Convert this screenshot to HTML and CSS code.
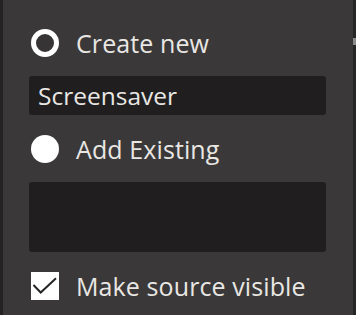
FILE: index.html
```html
<!DOCTYPE html>
<html>
<head>
<meta charset="utf-8">
<link rel="stylesheet" href="styles.css">
</head>
<body>
<div class="frame">
  <div class="edge-left"></div>
  <div class="panel">
    <div class="row row-first">
      <span class="radio radio-ring"></span>
      <span class="label">Create new</span>
    </div>
    <div class="field field-text">Screensaver</div>
    <div class="row">
      <span class="radio radio-filled"></span>
      <span class="label">Add Existing</span>
    </div>
    <div class="field field-list"></div>
    <div class="row">
      <span class="check">
        <svg width="28" height="28" viewBox="0 0 28 28"><path d="M2.5 13 L9.7 20.5 L25 6.3" fill="none" stroke="#262425" stroke-width="2"/></svg>
      </span>
      <span class="label">Make source visible</span>
    </div>
  </div>
  <div class="edge-right"><span class="thumb"></span></div>
</div>
</body>
</html>
```
FILE: styles.css
```css
html, body {
  margin: 0;
  padding: 0;
  background: #3a3838;
}
.frame {
  width: 356px;
  height: 315px;
  display: flex;
  overflow: hidden;
  font-family: "Open Sans", "Noto Sans", sans-serif;
  color: #e9e7e4;
}
.edge-left {
  width: 3px;
  background: #242223;
  flex: none;
}
.panel {
  flex: 1;
  padding-left: 26px;
  padding-right: 27px;
  display: flex;
  flex-direction: column;
}
.edge-right {
  width: 3px;
  background: #272627;
  flex: none;
  position: relative;
}
.thumb {
  position: absolute;
  left: 0;
  top: 38px;
  width: 3px;
  height: 7px;
  background: #8a8a8a;
}
.row {
  display: flex;
  align-items: center;
  height: 28px;
  margin-top: 20px;
  padding-left: 2px;
}
.row-first {
  margin-top: 29px;
}
.radio {
  width: 28px;
  height: 28px;
  box-sizing: border-box;
  border-radius: 50%;
  flex: none;
}
.radio-ring {
  border: 5px solid #ffffff;
  background: #363434;
}
.radio-filled {
  background: #ffffff;
}
.check {
  width: 28px;
  height: 28px;
  background: #ffffff;
  flex: none;
  display: block;
}
.check svg {
  display: block;
}
.label {
  margin-left: 17px;
  font-size: 25px;
  line-height: 28px;
  letter-spacing: 0.1px;
  white-space: nowrap;
}
.field {
  background: #201e1f;
  border-radius: 3px;
  margin-top: 19px;
}
.field-text {
  height: 39px;
  box-sizing: border-box;
  padding-left: 9px;
  font-size: 24.5px;
  line-height: 39px;
}
.field-list {
  height: 70px;
}
```
